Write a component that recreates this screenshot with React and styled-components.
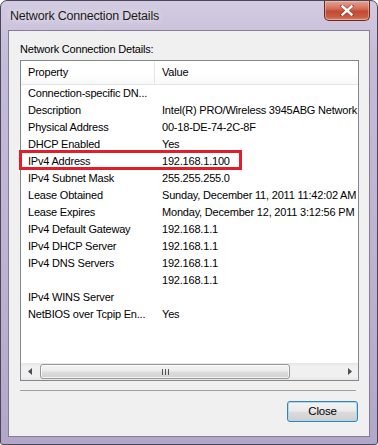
import React from "react";
import styled, { createGlobalStyle } from "styled-components";

const Global = createGlobalStyle`
  html, body { margin: 0; padding: 0; background: #ffffff; overflow: hidden; }
  * { box-sizing: border-box; }
`;

const FONT = `"Liberation Sans", Arial, sans-serif`;

const Window = styled.div`
  width: 378px;
  height: 445px;
  display: flex;
  flex-direction: column;
  padding: 0 7px 7px 7px;
  border: 1px solid #4a4658;
  border-radius: 7px 7px 3px 3px;
  background: linear-gradient(180deg, #d3cbe1 0%, #c5bcd7 12%, #bdb3d0 60%, #b2a7c9 100%);
  font-family: ${FONT};
  font-size: 11px;
  letter-spacing: -0.2px;
  color: #000;
`;

const TitleBar = styled.div`
  height: 29px;
  display: flex;
  align-items: flex-start;
  justify-content: space-between;
  flex-shrink: 0;
`;

const Title = styled.div`
  margin: 8px 0 0 2px;
  font-size: 12.5px;
  color: #1a1a1a;
  text-shadow: 0 0 7px rgba(255, 255, 255, 0.95);
`;

const CloseBox = styled.div`
  width: 46px;
  height: 20px;
  display: flex;
  align-items: center;
  justify-content: center;
  border: 1px solid #6a2a20;
  border-top: none;
  border-radius: 0 0 5px 5px;
  background: linear-gradient(180deg, #e3a496 0%, #d46e5a 40%, #c04a36 55%, #cb5e44 85%, #dc8a6c 100%);
  box-shadow: inset 0 0 0 1px rgba(255, 210, 200, 0.45);
`;

const Client = styled.div`
  flex: 1;
  display: flex;
  flex-direction: column;
  background: #f0f0f0;
  border: 1px solid #857d96;
  padding: 11px 10px 0 11px;
`;

const Label = styled.div`
  height: 15px;
  line-height: 15px;
  margin-bottom: 3px;
`;

const ListBox = styled.div`
  height: 321px;
  flex-shrink: 0;
  display: flex;
  flex-direction: column;
  background: #ffffff;
  border: 1px solid #828790;
`;

const HeaderRow = styled.div`
  height: 24px;
  display: grid;
  grid-template-columns: 134px 1fr;
  background: linear-gradient(180deg, #ffffff 0%, #ffffff 55%, #f7f8f9 100%);
  border-bottom: 1px solid #e5e5e5;
`;

const HeaderCell = styled.div`
  display: flex;
  align-items: center;
  padding-left: 7px;
  padding-bottom: 1px;
  border-right: ${(p) => (p.$divider ? "1px solid #e3e5e7" : "none")};
  white-space: nowrap;
  overflow: hidden;
`;

const Body = styled.div`
  flex: 1;
  display: flex;
  flex-direction: column;
`;

const Row = styled.div`
  position: relative;
  height: 17px;
  display: grid;
  grid-template-columns: 134px 1fr;
  line-height: 17px;
`;

const Cell = styled.div`
  padding-left: 7px;
  white-space: nowrap;
  overflow: hidden;
`;

const Highlight = styled.div`
  position: absolute;
  left: -2px;
  top: -3px;
  width: 223px;
  height: 20px;
  border: 3px solid #e11f2a;
  pointer-events: none;
`;

const HScroll = styled.div`
  height: 17px;
  display: flex;
  align-items: stretch;
  background: linear-gradient(180deg, #e6e6e6 0%, #f0f0f0 20%, #f0f0f0 80%, #e6e6e6 100%);
`;

const ArrowBtn = styled.div`
  width: 17px;
  flex-shrink: 0;
  display: flex;
  align-items: center;
  justify-content: center;
  margin-left: ${(p) => (p.$right ? "auto" : "0")};
`;

const Thumb = styled.div`
  width: 250px;
  margin: 1px 0 1px 2px;
  display: flex;
  align-items: center;
  justify-content: center;
  border: 1px solid #989898;
  border-radius: 3px;
  background: linear-gradient(180deg, #f5f5f5 0%, #ececec 45%, #dcdcdc 55%, #d2d2d2 100%);
  box-shadow: inset 0 0 0 1px rgba(255, 255, 255, 0.7);
`;

const Separator = styled.div`
  height: 1px;
  margin: 9px 3px 0 0;
  background: #a0a0a0;
`;

const Footer = styled.div`
  display: flex;
  justify-content: flex-end;
  padding-top: 10px;
  padding-right: 1px;
`;

const Button = styled.button`
  width: 71px;
  height: 21px;
  padding: 0 0 1px 0;
  font-family: ${FONT};
  font-size: 11.5px;
  letter-spacing: -0.2px;
  color: #000;
  border: 1px solid #3c7fb1;
  border-radius: 3px;
  background: linear-gradient(180deg, #f3f3f3 0%, #ebebeb 48%, #dcdcdc 52%, #cfcfcf 100%);
  box-shadow: inset 0 0 0 1px #a8dcf5;
`;

const rows = [
  ["Connection-specific DN...", ""],
  ["Description", "Intel(R) PRO/Wireless 3945ABG Network"],
  ["Physical Address", "00-18-DE-74-2C-8F"],
  ["DHCP Enabled", "Yes"],
  ["IPv4 Address", "192.168.1.100", true],
  ["IPv4 Subnet Mask", "255.255.255.0"],
  ["Lease Obtained", "Sunday, December 11, 2011 11:42:02 AM"],
  ["Lease Expires", "Monday, December 12, 2011 3:12:56 PM"],
  ["IPv4 Default Gateway", "192.168.1.1"],
  ["IPv4 DHCP Server", "192.168.1.1"],
  ["IPv4 DNS Servers", "192.168.1.1"],
  ["", "192.168.1.1"],
  ["IPv4 WINS Server", ""],
  ["NetBIOS over Tcpip En...", "Yes"],
];

const CloseX = () => (
  <svg width="14" height="11" viewBox="0 0 14 11">
    <path d="M2 1 L12 10 M12 1 L2 10" stroke="#5a1a12" strokeWidth="3.6" strokeLinecap="square" opacity="0.5" />
    <path d="M2.5 1.5 L11.5 9.5 M11.5 1.5 L2.5 9.5" stroke="#ffffff" strokeWidth="2.4" strokeLinecap="square" />
  </svg>
);

const LeftArrow = () => (
  <svg width="4" height="7" viewBox="0 0 4 7">
    <path d="M4 0 L0 3.5 L4 7 Z" fill="#4d4d4d" />
  </svg>
);

const RightArrow = () => (
  <svg width="4" height="7" viewBox="0 0 4 7">
    <path d="M0 0 L4 3.5 L0 7 Z" fill="#4d4d4d" />
  </svg>
);

const Grip = () => (
  <svg width="7" height="6" viewBox="0 0 7 6">
    <path d="M0.5 0 V6 M3.5 0 V6 M6.5 0 V6" stroke="#555" strokeWidth="1" />
  </svg>
);

export default function App() {
  return (
    <>
      <Global />
      <Window>
        <TitleBar>
          <Title>Network Connection Details</Title>
          <CloseBox>
            <CloseX />
          </CloseBox>
        </TitleBar>
        <Client>
          <Label>Network Connection Details:</Label>
          <ListBox>
            <HeaderRow>
              <HeaderCell $divider>Property</HeaderCell>
              <HeaderCell>Value</HeaderCell>
            </HeaderRow>
            <Body>
              {rows.map(([k, v, hl], i) => (
                <Row key={i}>
                  <Cell>{k}</Cell>
                  <Cell>{v}</Cell>
                  {hl && <Highlight />}
                </Row>
              ))}
            </Body>
            <HScroll>
              <ArrowBtn>
                <LeftArrow />
              </ArrowBtn>
              <Thumb>
                <Grip />
              </Thumb>
              <ArrowBtn $right>
                <RightArrow />
              </ArrowBtn>
            </HScroll>
          </ListBox>
          <Separator />
          <Footer>
            <Button>Close</Button>
          </Footer>
        </Client>
      </Window>
    </>
  );
}
